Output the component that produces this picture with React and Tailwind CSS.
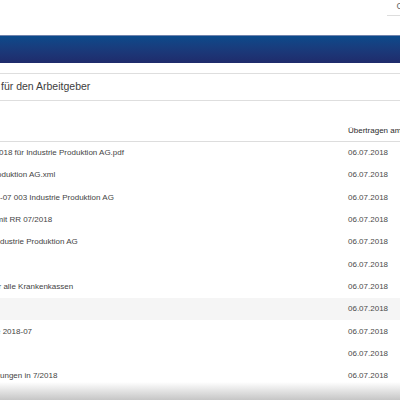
import React from 'react';

const rows = [
  { text: '018 für Industrie Produktion AG.pdf', shift: '-ml-[1px]' },
  { text: 'oduktion AG.xml', shift: '-ml-[3px]' },
  { text: '-07 003 Industrie Produktion AG', shift: 'ml-0' },
  { text: 'mit RR 07/2018', shift: '-ml-[3.5px]' },
  { text: 'ndustrie Produktion AG', shift: '-ml-[4.5px]' },
  { text: '', shift: 'ml-0' },
  { text: 'r alle Krankenkassen', shift: '-ml-[1.5px]' },
  { text: '', shift: 'ml-0', shaded: true },
  { text: 'e 2018-07', shift: '-ml-[4px]' },
  { text: '', shift: 'ml-0' },
  { text: 'ungen in 7/2018', shift: 'ml-0' },
];

export default function App() {
  return (
    <div className="w-[400px] h-[400px] overflow-hidden bg-white relative font-['Liberation_Sans',Arial,sans-serif]">
      {/* top strip */}
      <div className="h-[35px] flex justify-end items-start">
        <div className="w-[13px] h-[16px] border-b border-[#dddddd] flex justify-end items-start pt-[1px]">
          <span className="text-[9px] leading-[10px] text-[#666666] -mr-[3px]">C</span>
        </div>
      </div>

      {/* blue bar */}
      <div className="h-[28px] border-t border-[#6f83ad] bg-linear-to-b from-[#0a4a8b] to-[#1f2b6b]" />

      <div className="h-[10px] bg-white" />

      {/* title box */}
      <div className="h-[28px] border-y border-[#dedede] flex items-center">
        <span className="text-[10.5px] text-[#3d3d3d] ml-[1px]">für den Arbeitgeber</span>
      </div>

      {/* table header */}
      <div className="h-[41px] flex items-end border-b border-[#dddddd]">
        <div className="w-[348px] shrink-0" />
        <span className="text-[8px] leading-[10px] text-[#2b2b2b] pb-[5px] whitespace-nowrap">Übertragen am</span>
      </div>

      {/* table rows */}
      <div className="flex flex-col">
        {rows.map((r, i) => (
          <div
            key={i}
            className={`h-[22.3px] flex items-center shrink-0 ${r.shaded ? 'bg-[#f5f5f5]' : 'bg-white'}`}
          >
            <div className="w-[348px] shrink-0 whitespace-nowrap text-[8px] leading-[10px] text-[#444444]">
              <span className={`inline-block ${r.shift}`}>{r.text}</span>
            </div>
            <span className="text-[8px] leading-[10px] text-[#4a4a4a] whitespace-nowrap">06.07.2018</span>
          </div>
        ))}
      </div>

      {/* bottom shade */}
      <div className="absolute left-0 right-0 bottom-0 h-[18px] bg-linear-to-b from-[#ffffff00] to-[#c6c6c6] pointer-events-none" />
    </div>
  );
}
